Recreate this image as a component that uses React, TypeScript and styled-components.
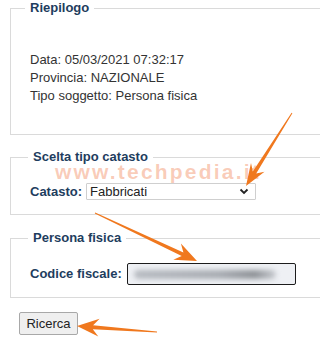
import React from "react";
import styled, { createGlobalStyle } from "styled-components";

const Global = createGlobalStyle`
  html, body { margin: 0; padding: 0; background: #fff; overflow: hidden; }
  body { font-family: "Liberation Sans", Arial, sans-serif; font-size: 13px; color: #333; }
`;

const Page = styled.div`
  position: relative;
  width: 320px;
  height: 350px;
  overflow: hidden;
  padding: 0 0 0 10px;
  box-sizing: border-box;
`;

const Fieldset = styled.fieldset<{ $top: number; $pt: number; $pb: number }>`
  margin: ${(p) => p.$top}px 0 0 0;
  padding: ${(p) => p.$pt}px 0 ${(p) => p.$pb}px 19px;
  border: 1px solid #dadada;
  width: 340px;
  box-sizing: border-box;
  min-inline-size: 0;
`;

const Legend = styled.legend<{ $indent: number }>`
  font-weight: bold;
  font-size: 13px;
  line-height: 16px;
  color: #1e3d5e;
  padding: 0 5px;
  margin-left: ${(p) => p.$indent}px;
`;

const Line = styled.div`
  line-height: 18px;
  color: #333;
`;

const Row = styled.div<{ $gap: number }>`
  display: flex;
  align-items: center;
  gap: ${(p) => p.$gap}px;
`;

const Label = styled.label`
  font-weight: bold;
  color: #1e3d5e;
  line-height: 16px;
`;

const SelectWrap = styled.div`
  position: relative;
  width: 170px;
  height: 17px;
`;

const Select = styled.select`
  appearance: none;
  width: 100%;
  height: 100%;
  box-sizing: border-box;
  border: 1px solid #cfcfcf;
  border-radius: 1px;
  background: #fff;
  font-family: "Liberation Sans", Arial, sans-serif;
  font-size: 13px;
  color: #222;
  padding: 0 0 0 3px;
  margin: 0;
  outline: none;
`;

const Chevron = styled.svg`
  position: absolute;
  right: 7px;
  top: 5px;
  pointer-events: none;
`;

const FakeInput = styled.div`
  position: relative;
  width: 169px;
  height: 22px;
  box-sizing: border-box;
  border: 1px solid #1c1c1c;
  border-radius: 2px;
  background: #eef0f4;
  overflow: hidden;
`;

const Blur = styled.div`
  position: absolute;
  left: 6px;
  top: 6px;
  width: 142px;
  height: 9px;
  border-radius: 5px;
  background: linear-gradient(90deg, #b8bcc2 0%, #a9adb3 60%, #8f9398 85%, #c8cbd0 100%);
  filter: blur(2.5px);
`;

const Button = styled.button`
  margin: 14px 0 0 9px;
  width: 59px;
  height: 23px;
  box-sizing: border-box;
  border: 1px solid #a8a8a8;
  border-radius: 2px;
  background: #efefef;
  font-family: "Liberation Sans", Arial, sans-serif;
  font-size: 13px;
  color: #222;
  padding: 0;
  display: block;
`;

const Watermark = styled.div`
  position: absolute;
  left: 55px;
  top: 162px;
  font-family: "Liberation Sans", Arial, sans-serif;
  font-weight: bold;
  font-size: 21px;
  line-height: 19px;
  letter-spacing: 2.2px;
  color: rgba(240, 120, 70, 0.38);
  pointer-events: none;
  white-space: nowrap;
`;

const Overlay = styled.svg`
  position: absolute;
  left: 0;
  top: 0;
  pointer-events: none;
`;

type P = [number, number];

function arrow(t: P, tip: P, w0: number, w1: number, L: number, H: number, notch: number) {
  const dx = tip[0] - t[0];
  const dy = tip[1] - t[1];
  const len = Math.hypot(dx, dy);
  const ux = dx / len;
  const uy = dy / len;
  const nx = -uy;
  const ny = ux;
  const bx = tip[0] - ux * L;
  const by = tip[1] - uy * L;
  const jx = bx + ux * notch;
  const jy = by + uy * notch;
  const pts: P[] = [
    [t[0] + (nx * w0) / 2, t[1] + (ny * w0) / 2],
    [jx + (nx * w1) / 2, jy + (ny * w1) / 2],
    [bx + nx * H, by + ny * H],
    tip,
    [bx - nx * H, by - ny * H],
    [jx - (nx * w1) / 2, jy - (ny * w1) / 2],
    [t[0] - (nx * w0) / 2, t[1] - (ny * w0) / 2],
  ];
  return pts.map((p) => `${p[0].toFixed(1)},${p[1].toFixed(1)}`).join(" ");
}

const arrows = [
  arrow([292, 113], [246, 186], 1, 4, 22, 8, 6),
  arrow([95, 213], [197, 261], 1, 4, 22, 9, 6),
  arrow([157, 332], [77, 326], 1, 4, 22, 9, 6),
];

export default function App() {
  return (
    <>
      <Global />
      <Page>
        <Fieldset $top={0} $pt={35} $pb={29}>
          <Legend $indent={-5}>Riepilogo</Legend>
          <Line>Data: 05/03/2021 07:32:17</Line>
          <Line>Provincia: NAZIONALE</Line>
          <Line>Tipo soggetto: Persona fisica</Line>
        </Fieldset>

        <Fieldset $top={14} $pt={18} $pb={14}>
          <Legend $indent={-2}>Scelta tipo catasto</Legend>
          <Row $gap={4}>
            <Label>Catasto:</Label>
            <SelectWrap>
              <Select defaultValue="F">
                <option value="F">Fabbricati</option>
                <option value="T">Terreni</option>
              </Select>
              <Chevron width="10" height="7" viewBox="0 0 10 7">
                <path d="M1.5 1.5 L5 5 L8.5 1.5" fill="none" stroke="#222" strokeWidth="1.8" />
              </Chevron>
            </SelectWrap>
          </Row>
        </Fieldset>

        <Fieldset $top={15} $pt={17} $pb={12}>
          <Legend $indent={-2}>Persona fisica</Legend>
          <Row $gap={5}>
            <Label>Codice fiscale:</Label>
            <FakeInput>
              <Blur />
            </FakeInput>
          </Row>
        </Fieldset>

        <Button>Ricerca</Button>

        <Watermark>www.techpedia.it</Watermark>
        <Overlay width="320" height="350" viewBox="0 0 320 350">
          {arrows.map((pts, i) => (
            <polygon key={i} points={pts} fill="#f0781e" />
          ))}
        </Overlay>
      </Page>
    </>
  );
}
